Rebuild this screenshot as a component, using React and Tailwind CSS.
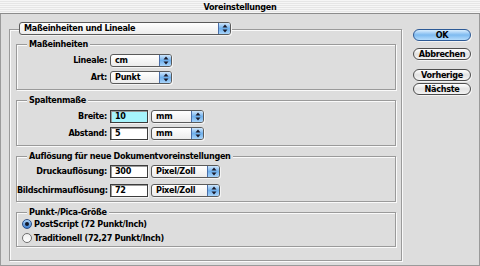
import React from 'react';

const font = { fontFamily: '"DejaVu Sans Condensed", "Liberation Sans", sans-serif' };

function Arrows() {
  return (
    <svg width="6" height="9" viewBox="0 0 6 9">
      <path d="M3 0.5 L5.5 3.5 L0.5 3.5 Z" fill="#1a1a2a" />
      <path d="M3 8.5 L5.5 5.5 L0.5 5.5 Z" fill="#1a1a2a" />
    </svg>
  );
}

function Popup({ value, width }) {
  return (
    <div className={`flex h-[13px] items-stretch rounded-[3px] border border-[#5a5a5a] bg-gradient-to-b from-white to-[#ececec] shadow-[1px_1px_0_#f4f4f4] ${width}`}>
      <span className="flex-1 pl-[4px] leading-[11px]">{value}</span>
      <span className="flex w-[12px] items-center justify-center rounded-r-[2px] border-l border-[#4a6ea8] bg-gradient-to-b from-[#cfe6fb] via-[#6fb0ec] to-[#a8d4fa]">
        <Arrows />
      </span>
    </div>
  );
}

function Field({ value, focused }) {
  return (
    <div className={`h-[13px] w-[38px] border border-[#3c3c3c] pl-[4px] leading-[11px] shadow-[inset_1px_1px_0_#9a9a9a,1px_1px_0_#f4f4f4] ${focused ? 'bg-[#a6f4fc]' : 'bg-white'}`}>
      {value}
    </div>
  );
}

function Group({ title, className = '', children }) {
  return (
    <div className={`border border-[#9a9a9a] shadow-[inset_1px_1px_0_#fafafa,1px_1px_0_#fafafa] ${className}`}>
      <div className="-mt-[7px] ml-[10px] w-fit bg-[#dddddd] px-[2px] leading-[12px]">{title}</div>
      {children}
    </div>
  );
}

function Row({ label, children }) {
  return (
    <div className="flex items-center gap-[3px]">
      <span className="w-[90px] text-right">{label}</span>
      {children}
    </div>
  );
}

function Button({ label, primary }) {
  return (
    <div
      className={`flex h-[12px] w-[58px] items-center justify-center rounded-full border leading-none shadow-[1px_1px_0_#f4f4f4] ${
        primary
          ? 'border-[#2d5a96] bg-gradient-to-b from-[#d9edfd] via-[#7dbaf0] to-[#b5dcfb]'
          : 'border-[#4d4d4d] bg-gradient-to-b from-white via-[#e2e2e2] to-[#f4f4f4]'
      }`}
    >
      {label}
    </div>
  );
}

function Radio({ checked, label }) {
  return (
    <div className="flex h-[12px] items-center gap-[2px] leading-[12px]">
      {checked ? (
        <span className="flex h-[10px] w-[10px] items-center justify-center rounded-full border border-[#2d4f86] bg-gradient-to-b from-[#a9d3f8] to-[#3d7fd0]">
          <span className="h-[4px] w-[4px] rounded-full bg-[#10182a]" />
        </span>
      ) : (
        <span className="h-[10px] w-[10px] rounded-full border border-[#707070] bg-gradient-to-b from-[#f0f0f0] to-white" />
      )}
      <span>{label}</span>
    </div>
  );
}

export default function App() {
  return (
    <div style={font} className="flex h-[266px] w-[480px] flex-col overflow-hidden bg-[#dddddd] text-[9px] font-bold tracking-[-0.3px] text-black">
      <div className="flex h-[14px] items-center justify-center border-b border-[#8c8c8c] bg-[repeating-linear-gradient(to_bottom,#f6f6f6_0px,#f6f6f6_1px,#e6e6e6_1px,#e6e6e6_2px)]">
        <span className="px-[4px] leading-[12px]">Voreinstellungen</span>
      </div>

      <div className="flex flex-1 border-l border-r border-b border-[#9a9a9a] pl-[8px] pt-[15px]">
        <div className="w-[393px]">
          <div className="h-[232px] border border-[#9a9a9a] shadow-[inset_1px_1px_0_#fafafa,1px_1px_0_#fafafa]">
            <div className="-mt-[8px] ml-[9px]">
              <Popup value="Maßeinheiten und Lineale" width="w-[212px]" />
            </div>

            <div className="flex flex-col gap-[10px] pl-[6px] pr-[5px] pt-[9px]">
              <Group title="Maßeinheiten" className="h-[46px]">
                <div className="flex flex-col gap-[3px] pt-[4px]">
                  <Row label="Lineale:">
                    <Popup value="cm" width="w-[62px]" />
                  </Row>
                  <Row label="Art:">
                    <Popup value="Punkt" width="w-[62px]" />
                  </Row>
                </div>
              </Group>

              <Group title="Spaltenmaße" className="h-[46px]">
                <div className="flex flex-col gap-[3px] pt-[4px]">
                  <Row label="Breite:">
                    <Field value="10" focused />
                    <Popup value="mm" width="w-[53px]" />
                  </Row>
                  <Row label="Abstand:">
                    <Field value="5" />
                    <Popup value="mm" width="w-[53px]" />
                  </Row>
                </div>
              </Group>

              <Group title="Auflösung für neue Dokumentvoreinstellungen" className="h-[46px]">
                <div className="flex flex-col gap-[5px] pt-[3px]">
                  <Row label="Druckauflösung:">
                    <Field value="300" />
                    <Popup value="Pixel/Zoll" width="w-[69px]" />
                  </Row>
                  <Row label="Bildschirmauflösung:">
                    <Field value="72" />
                    <Popup value="Pixel/Zoll" width="w-[69px]" />
                  </Row>
                </div>
              </Group>

              <Group title="Punkt-/Pica-Größe" className="h-[35px]">
                <div className="flex flex-col gap-[2px] pl-[5px]">
                  <Radio checked label="PostScript (72 Punkt/Inch)" />
                  <Radio label="Traditionell (72,27 Punkt/Inch)" />
                </div>
              </Group>
            </div>
          </div>
        </div>

        <div className="ml-[11px] flex flex-col">
          <Button label="OK" primary />
          <div className="mt-[7px]">
            <Button label="Abbrechen" />
          </div>
          <div className="mt-[9px]">
            <Button label="Vorherige" />
          </div>
          <div className="mt-[2px]">
            <Button label="Nächste" />
          </div>
        </div>
      </div>
    </div>
  );
}
